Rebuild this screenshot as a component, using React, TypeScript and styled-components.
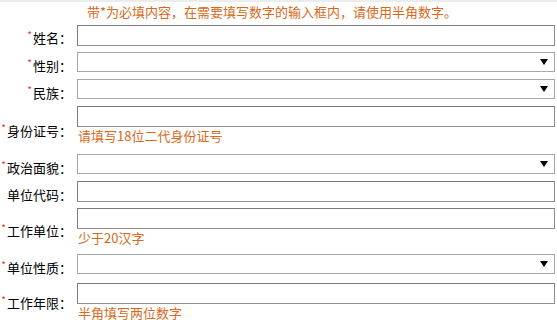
import React from "react";
import styled, { createGlobalStyle } from "styled-components";

const Global = createGlobalStyle`
  html, body { margin: 0; padding: 0; background: #fff; }
  body {
    font-family: "Noto Sans CJK SC", "Noto Sans", sans-serif;
    font-size: 13px;
    color: #000;
  }
`;

const Page = styled.div`
  width: 557px;
  height: 320px;
  overflow: hidden;
  box-sizing: border-box;
  border-top: 2px solid #ececec;
`;

const Notice = styled.div`
  height: 21px;
  padding-left: 87px;
  color: #d8691a;
  font-size: 13px;
  line-height: 19px;
  white-space: nowrap;
`;

const Form = styled.div`
  display: grid;
  grid-template-columns: 72px 478px;
  column-gap: 5px;
`;

const Label = styled.div<{ $shift: number }>`
  display: flex;
  align-items: center;
  justify-content: flex-end;
  white-space: nowrap;
  font-size: 13px;
  line-height: 16px;
  padding-top: ${(p) => p.$shift}px;
`;

const Star = styled.span`
  color: #e2373a;
  font-size: 10px;
  position: relative;
  top: -3px;
  margin-right: 1px;
`;

const Field = styled.div<{ $pt: number; $pb: number }>`
  display: flex;
  flex-direction: column;
  padding-top: ${(p) => p.$pt}px;
  padding-bottom: ${(p) => p.$pb}px;
`;

const TextInput = styled.input`
  box-sizing: border-box;
  width: 478px;
  height: 21px;
  margin: 0;
  padding: 1px 3px;
  border: 1px solid #7c7c7c;
  border-bottom-color: #8e8e8e;
  border-right-color: #8e8e8e;
  background: #fff;
  font: inherit;
  outline: none;
`;

const SelectWrap = styled.div`
  position: relative;
  width: 478px;
  height: 20px;
  &::after {
    content: "";
    position: absolute;
    right: 7px;
    top: 7px;
    border-left: 4px solid transparent;
    border-right: 4px solid transparent;
    border-top: 6px solid #000;
    pointer-events: none;
  }
`;

const Select = styled.select`
  appearance: none;
  -webkit-appearance: none;
  box-sizing: border-box;
  width: 100%;
  height: 20px;
  margin: 0;
  padding: 0 3px;
  border: 1px solid #a8a8a8;
  border-radius: 0;
  background: #fff;
  font: inherit;
  outline: none;
`;

const Hint = styled.div`
  color: #d8691a;
  font-size: 13px;
  line-height: 18px;
  padding-left: 1px;
  white-space: nowrap;
`;

type Row = {
  label: string;
  required: boolean;
  kind: "input" | "select";
  hint?: string;
  pt: number;
  pb: number;
};

const rows: Row[] = [
  { label: "姓名：", required: true, kind: "input", pt: 2, pb: 6 },
  { label: "性别：", required: true, kind: "select", pt: 0, pb: 7 },
  { label: "民族：", required: true, kind: "select", pt: 0, pb: 7 },
  { label: "身份证号：", required: true, kind: "input", hint: "请填写18位二代身份证号", pt: 0, pb: 9 },
  { label: "政治面貌：", required: true, kind: "select", pt: 0, pb: 7 },
  { label: "单位代码：", required: false, kind: "input", pt: 0, pb: 6 },
  { label: "工作单位：", required: true, kind: "input", hint: "少于20汉字", pt: 0, pb: 6 },
  { label: "单位性质：", required: true, kind: "select", pt: 1, pb: 9 },
  { label: "工作年限：", required: true, kind: "input", hint: "半角填写两位数字", pt: 0, pb: 0 },
];

export default function App() {
  return (
    <>
      <Global />
      <Page>
        <Notice>带*为必填内容，在需要填写数字的输入框内，请使用半角数字。</Notice>
        <Form>
          {rows.map((r) => (
            <React.Fragment key={r.label}>
              <Label $shift={r.hint ? 1 : 0}>
                {r.required ? <Star>*</Star> : null}
                <span>{r.label}</span>
              </Label>
              <Field $pt={r.pt} $pb={r.pb}>
                {r.kind === "input" ? (
                  <TextInput type="text" />
                ) : (
                  <SelectWrap>
                    <Select>
                      <option value=""></option>
                    </Select>
                  </SelectWrap>
                )}
                {r.hint ? <Hint>{r.hint}</Hint> : null}
              </Field>
            </React.Fragment>
          ))}
        </Form>
      </Page>
    </>
  );
}
